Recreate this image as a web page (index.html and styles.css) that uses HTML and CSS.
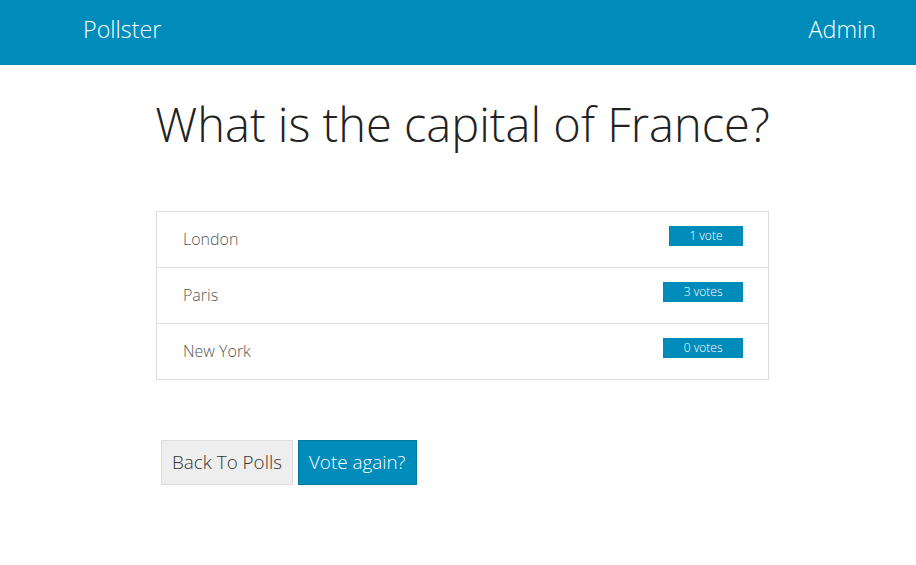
FILE: index.html
```html
<!DOCTYPE html>
<html>
<head>
<meta charset="utf-8">
<link rel="stylesheet" href="styles.css">
</head>
<body>
<nav class="navbar">
  <a class="brand" href="#">Pollster</a>
  <a class="nav-link" href="#">Admin</a>
</nav>
<main class="content">
  <h1 class="title">What is the capital of France?</h1>
  <ul class="choices">
    <li class="choice"><span class="choice-text">London</span><span class="badge">1 vote</span></li>
    <li class="choice"><span class="choice-text">Paris</span><span class="badge">3 votes</span></li>
    <li class="choice"><span class="choice-text">New York</span><span class="badge">0 votes</span></li>
  </ul>
  <div class="actions">
    <a class="btn btn-default" href="#">Back To Polls</a>
    <a class="btn btn-primary" href="#">Vote again?</a>
  </div>
</main>
</body>
</html>
```
FILE: styles.css
```css
* { box-sizing: border-box; }
html, body { margin: 0; padding: 0; }
body {
  font-family: "Open Sans", "Liberation Sans", sans-serif;
  font-weight: 300;
  color: #222;
  background: #fff;
}
a { text-decoration: none; }
.navbar {
  height: 65px;
  background: #008cba;
  display: flex;
  justify-content: space-between;
  align-items: center;
  padding: 0 40px 0 83px;
}
.brand, .nav-link {
  color: #fff;
  font-size: 23.3px;
  font-weight: 300;
  line-height: 1;
  margin-top: -6px;
}
.content {
  width: 613px;
  margin-left: calc(50% - 302px);
}
.title {
  margin: 34px -30px 0;
  font-size: 47px;
  font-weight: 300;
  line-height: 1.1;
  text-align: center;
  white-space: nowrap;
  color: #222;
}
.choices {
  list-style: none;
  margin: 60px 0 0;
  padding: 0;
  border: 1px solid #ddd;
}
.choice {
  height: 56px;
  display: flex;
  align-items: center;
  justify-content: space-between;
  padding: 0 25px 0 26px;
  border-top: 1px solid #ddd;
}
.choice:first-child { border-top: none; height: 55px; }
.choice-text {
  font-size: 16px;
  color: #555;
  margin-top: 0;
}
.badge {
  background: #008cba;
  color: #fff;
  font-size: 12px;
  font-weight: 300;
  line-height: 14px;
  padding: 3px 20.5px 3px;
  margin-top: -6px;
}
.actions {
  margin-top: 60px;
  padding-left: 5px;
  display: flex;
  gap: 5px;
}
.btn {
  display: inline-block;
  height: 45px;
  line-height: 43px;
  font-size: 18.85px;
  font-weight: 300;
  padding: 0 10px;
  border: 1px solid transparent;
}
.btn-default {
  background: #eee;
  border-color: #ddd;
  color: #333;
}
.btn-primary {
  background: #008cba;
  border-color: #0079a1;
  color: #fff;
}
```
